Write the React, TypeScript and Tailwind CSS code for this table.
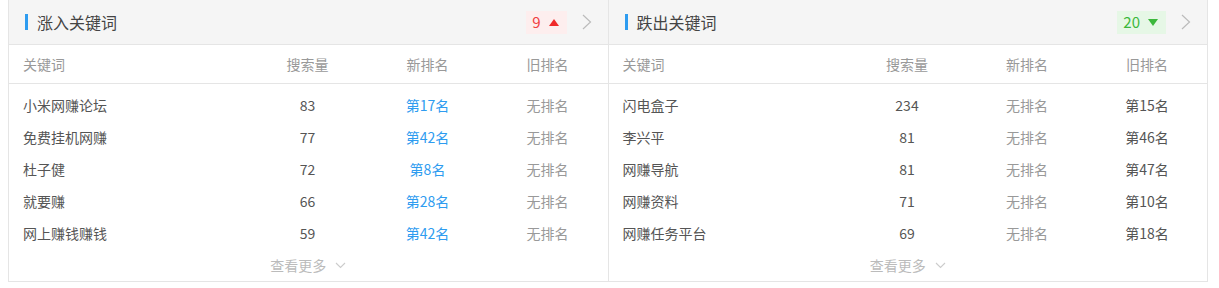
type Row = { word: string; count: number; newRank: string; oldRank: string };

const risingRows: Row[] = [
  { word: "小米网赚论坛", count: 83, newRank: "第17名", oldRank: "无排名" },
  { word: "免费挂机网赚", count: 77, newRank: "第42名", oldRank: "无排名" },
  { word: "杜子健", count: 72, newRank: "第8名", oldRank: "无排名" },
  { word: "就要赚", count: 66, newRank: "第28名", oldRank: "无排名" },
  { word: "网上赚钱赚钱", count: 59, newRank: "第42名", oldRank: "无排名" },
];

const fallingRows: Row[] = [
  { word: "闪电盒子", count: 234, newRank: "无排名", oldRank: "第15名" },
  { word: "李兴平", count: 81, newRank: "无排名", oldRank: "第46名" },
  { word: "网赚导航", count: 81, newRank: "无排名", oldRank: "第47名" },
  { word: "网赚资料", count: 71, newRank: "无排名", oldRank: "第10名" },
  { word: "网赚任务平台", count: 69, newRank: "无排名", oldRank: "第18名" },
];

function Panel({
  title,
  count,
  up,
  rows,
  last,
}: {
  title: string;
  count: number;
  up: boolean;
  rows: Row[];
  last?: boolean;
}) {
  return (
    <div className={"flex-1 flex flex-col " + (last ? "" : "border-r border-[#e5e5e5]")}>
      {/* header */}
      <div className="h-[45px] bg-[#f5f5f5] border-b border-[#e5e5e5] flex items-center pl-4 pr-[16px]">
        <span className="w-[3px] h-4 bg-[#2e9cf0]" />
        <span className="ml-[9px] text-[16px] text-[#444]">{title}</span>
        <div className="ml-auto flex items-center">
          <span
            className={
              "h-[23px] pl-[6px] pr-[8px] flex items-center gap-[8px] text-[15px] " +
              (up ? "bg-[#fdeeee] text-[#f04040]" : "bg-[#e6f7e6] text-[#3cb83c]")
            }
          >
            {count}
            {up ? (
              <span className="w-0 h-0 border-l-[5px] border-r-[5px] border-b-[7px] border-l-transparent border-r-transparent border-b-[#f02a2a]" />
            ) : (
              <span className="w-0 h-0 border-l-[5px] border-r-[5px] border-t-[7px] border-l-transparent border-r-transparent border-t-[#3cb83c]" />
            )}
          </span>
          <svg className="ml-[15px]" width="10" height="16" viewBox="0 0 10 16" fill="none">
            <polyline points="1,1 8.5,8 1,15" stroke="#bbb" strokeWidth="1.2" />
          </svg>
        </div>
      </div>

      {/* column heads */}
      <div className="h-[39px] grid grid-cols-[1fr_120px_120px_120px] items-center border-b border-[#e5e5e5] text-[14px] text-[#999]">
        <span className="pl-[14px]">关键词</span>
        <span className="text-center">搜索量</span>
        <span className="text-center">新排名</span>
        <span className="text-center">旧排名</span>
      </div>

      {/* rows */}
      <div className="pt-[5px]">
        {rows.map((r) => (
          <div
            key={r.word}
            className="h-[32px] grid grid-cols-[1fr_120px_120px_120px] items-center text-[14px]"
          >
            <span className="pl-[14px] text-[#555]">{r.word}</span>
            <span className="text-center text-[#555]">{r.count}</span>
            <span className={"text-center " + (up ? "text-[#2e9cf0]" : "text-[#999]")}>
              {r.newRank}
            </span>
            <span className={"text-center " + (up ? "text-[#999]" : "text-[#555]")}>
              {r.oldRank}
            </span>
          </div>
        ))}
      </div>

      <div className="h-[32px] flex items-center justify-center text-[14px] text-[#bbb]">
        查看更多
        <svg className="ml-[9px]" width="11" height="7" viewBox="0 0 11 7" fill="none">
          <polyline points="1,1 5.5,5.5 10,1" stroke="#ccc" strokeWidth="1.1" />
        </svg>
      </div>
    </div>
  );
}

export default function App() {
  return (
    <div
      className="w-[1219px] h-[288px] bg-white pl-2 pr-[11px]"
      style={{ fontFamily: '"Noto Sans CJK SC", "Noto Sans", sans-serif' }}
    >
      <div className="flex border-l border-r border-b border-[#e5e5e5]">
        <Panel title="涨入关键词" count={9} up rows={risingRows} />
        <Panel title="跌出关键词" count={20} up={false} rows={fallingRows} last />
      </div>
    </div>
  );
}
